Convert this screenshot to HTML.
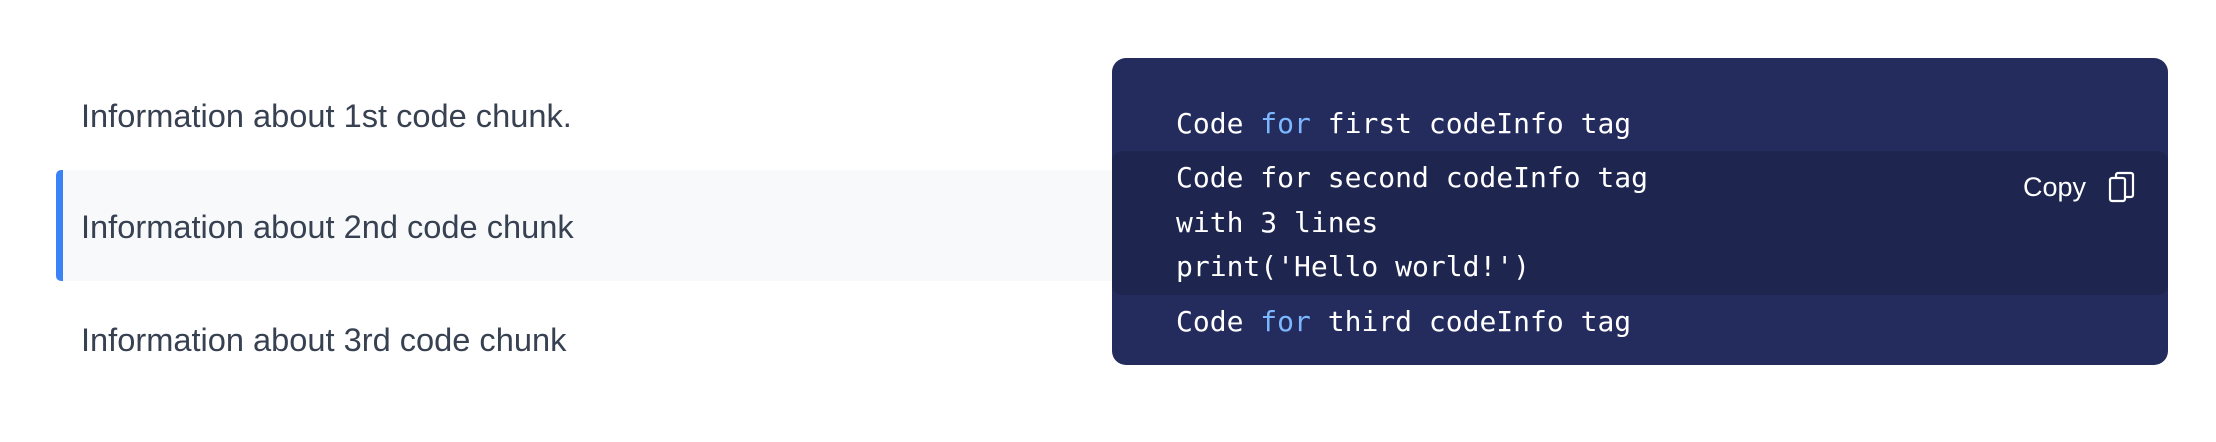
<!DOCTYPE html>
<html><head><style>
body{margin:0;width:2216px;height:442px;background:#fff;position:relative;overflow:hidden;font-family:"Liberation Sans",sans-serif;}
.row{position:absolute;left:56px;width:1080px;height:111px;color:#374151;font-size:32.6px;line-height:113px;padding-left:25px;box-sizing:border-box;}
.hl{background:#f7f9fb;border-left:7px solid #3b82f6;border-radius:5px 0 0 5px;padding-left:18px;}
.box{position:absolute;left:1112px;top:58px;width:1056px;height:307px;background:#242c5e;border-radius:14px;overflow:hidden;font-family:"DejaVu Sans Mono","Liberation Mono",monospace;color:#fff;font-size:28px;}
.band{position:absolute;left:0;top:93px;width:100%;height:144px;background:#1e2650;border-radius:10px;}
.l{position:absolute;left:64px;white-space:pre;line-height:40px;}
.k{color:#7cb7ff;}
.copy{position:absolute;left:911px;top:109px;font-family:"Liberation Sans",sans-serif;font-size:27px;line-height:40px;}
</style></head><body>
<div class="row" style="top:59px">Information about 1st code chunk.</div>
<div class="row hl" style="top:170px">Information about 2nd code chunk</div>
<div class="row" style="top:283px">Information about 3rd code chunk</div>
<div class="box">
<div class="band"></div>
<div class="l" style="top:46px">Code <span class="k">for</span> first codeInfo tag</div>
<div class="l" style="top:100px">Code for second codeInfo tag</div>
<div class="l" style="top:145px">with 3 lines</div>
<div class="l" style="top:189px">print('Hello world!')</div>
<div class="l" style="top:244px">Code <span class="k">for</span> third codeInfo tag</div>
<div class="copy">Copy</div>
<svg style="position:absolute;left:996px;top:113px" width="28" height="32" viewBox="0 0 28 32" fill="none" stroke="#fff" stroke-width="2.2"><rect x="2" y="7" width="15" height="23" rx="2"/><path d="M8 7V4a2 2 0 0 1 2-2h13a2 2 0 0 1 2 2v20a2 2 0 0 1-2 2h-6"/></svg>
</div>
</body></html>
